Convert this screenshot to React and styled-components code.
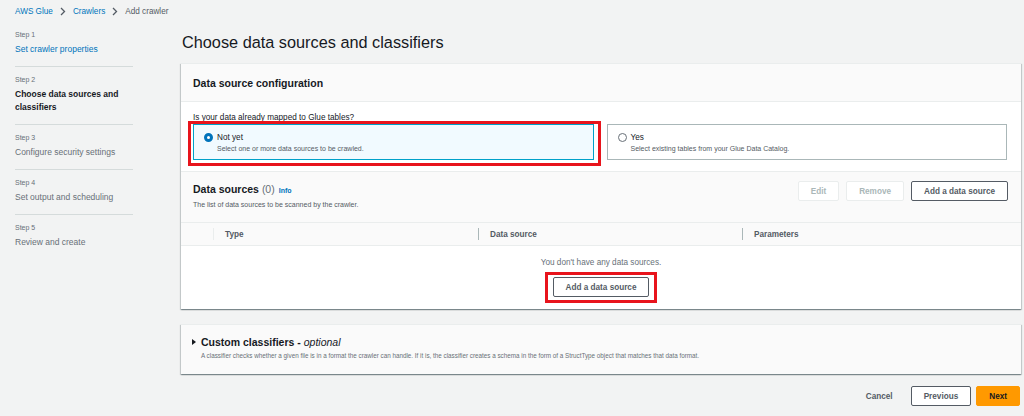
import styled, { createGlobalStyle } from 'styled-components';

const GlobalStyle = createGlobalStyle`
    html, body {
        margin: 0;
        padding: 0;
        background: #f2f3f3;
    }
    body {
        font-family: "Liberation Sans", Arial, sans-serif;
        color: #16191f;
    }
    * {
        box-sizing: border-box;
    }
`;

//
const Page = styled.div({
    display: 'grid',
    gridTemplateColumns: '181px 1fr',
    gridTemplateRows: '22px auto',
    width: '1024px',
    height: '416px',
    overflow: 'hidden',
});

//
const Breadcrumbs = styled.nav({
    gridColumn: '1 / 3',
    display: 'flex',
    alignItems: 'center',
    gap: '7px',
    paddingLeft: '15px',
    fontSize: '8.2px',
    '.link': {
        color: '#0073bb',
    },
    '.current': {
        color: '#545b64',
    },
});

//
const SideNav = styled.aside({
    paddingLeft: '15px',
    '.step': {
        width: '118px',
        padding: '7px 0 10px',
        borderBottom: '1px solid #d5dbdb',
        '&:last-child': {
            borderBottom: '0',
        },
    },
    '.label': {
        fontSize: '7px',
        lineHeight: '12px',
        color: '#687078',
    },
    '.title': {
        marginTop: '2px',
        fontSize: '8.5px',
        lineHeight: '13px',
        color: '#687078',
    },
    '.done': {
        color: '#0073bb',
    },
    '.active': {
        color: '#16191f',
        fontWeight: 'bold',
    },
});

//
const Main = styled.main({
    padding: '8px 3px 0 0',
    h1: {
        margin: '0 0 9px 1px',
        fontSize: '16.3px',
        lineHeight: '24px',
        fontWeight: 'normal',
    },
});

//
const Container = styled.section(({ $muted }) => ({
    position: 'relative',
    background: $muted ? '#fafafa' : '#fff',
    borderTop: '1px solid #eaeded',
    boxShadow: '0 1px 1px 0 rgba(0,28,36,.3), 1px 1px 1px 0 rgba(0,28,36,.15), -1px 1px 1px 0 rgba(0,28,36,.15)',
}));

//
const PanelHeader = styled.header({
    display: 'flex',
    alignItems: 'center',
    height: '38px',
    padding: '0 12px',
    background: '#fafafa',
    borderBottom: '1px solid #eaeded',
    fontSize: '10.5px',
    fontWeight: 'bold',
});

//
const PanelBody = styled.div({
    padding: '10px 14px 11px 12px',
    borderBottom: '1px solid #eaeded',
    '.question': {
        fontSize: '8.2px',
        lineHeight: '12px',
    },
});

//
const Tiles = styled.div({
    display: 'grid',
    gridTemplateColumns: '1fr 1fr',
    gap: '13px',
});

//
const Tile = styled.label(({ $checked }) => ({
    position: 'relative',
    display: 'block',
    height: '36px',
    padding: '5px 10px 5px 10px',
    border: `1px solid ${$checked ? '#00a1c9' : '#aab7b8'}`,
    background: $checked ? '#f1faff' : '#fff',
    '.row': {
        display: 'flex',
        alignItems: 'center',
        gap: '4px',
        height: '14px',
        fontSize: '8.2px',
    },
    '.desc': {
        paddingLeft: '13px',
        fontSize: '7px',
        lineHeight: '10px',
        color: '#545b64',
    },
}));

//
const Radio = styled.span(({ $checked }) => ({
    display: 'inline-block',
    width: '9px',
    height: '9px',
    borderRadius: '50%',
    border: $checked ? '3px solid #0073bb' : '1px solid #687078',
    background: '#fff',
}));

// 標註框
const Highlight = styled.span(({ $inset }) => ({
    position: 'absolute',
    inset: $inset,
    border: '3px solid #e8141c',
    pointerEvents: 'none',
}));

//
const TableHeader = styled.div({
    display: 'flex',
    justifyContent: 'space-between',
    alignItems: 'flex-start',
    height: '50px',
    padding: '10px 13px 0 12px',
    background: '#fafafa',
    h2: {
        margin: 0,
        fontSize: '10.5px',
        lineHeight: '14px',
        fontWeight: 'bold',
    },
    '.count': {
        fontWeight: 'normal',
        color: '#687078',
    },
    '.info': {
        marginLeft: '4px',
        fontSize: '7px',
        color: '#0073bb',
    },
    '.desc': {
        marginTop: '2px',
        fontSize: '7px',
        lineHeight: '10px',
        color: '#545b64',
    },
    '.actions': {
        display: 'flex',
        gap: '7px',
        marginTop: '-1px',
    },
});

//
const Button = styled.button(({ $variant }) => ({
    position: 'relative',
    height: '20px',
    padding: '0 12px',
    borderRadius: '2px',
    fontFamily: 'inherit',
    fontSize: '8.2px',
    fontWeight: 'bold',
    cursor: 'pointer',
    ...($variant === 'disabled' && {
        border: '1px solid #eaeded',
        background: '#fff',
        color: '#aab7b8',
    }),
    ...($variant === 'normal' && {
        border: '1px solid #545b64',
        background: '#fff',
        color: '#545b64',
    }),
    ...($variant === 'link' && {
        border: '1px solid transparent',
        background: 'transparent',
        color: '#545b64',
    }),
    ...($variant === 'primary' && {
        border: '1px solid #ff9900',
        background: '#ff9900',
        color: '#16191f',
    }),
}));

//
const ColumnRow = styled.div({
    display: 'grid',
    gridTemplateColumns: '32px 265px 264px 1fr',
    height: '24px',
    background: '#fafafa',
    borderTop: '1px solid #eaeded',
    borderBottom: '1px solid #eaeded',
});

//
const Column = styled.div(({ $faint }) => ({
    position: 'relative',
    display: 'flex',
    alignItems: 'center',
    paddingLeft: '12px',
    fontSize: '8.2px',
    fontWeight: 'bold',
    color: '#545b64',
    '&::before': {
        content: '""',
        position: 'absolute',
        left: 0,
        top: '5px',
        height: '12px',
        borderLeft: `1px solid ${$faint ? '#eaeded' : '#aab7b8'}`,
    },
}));

//
const EmptyState = styled.div({
    display: 'flex',
    flexDirection: 'column',
    alignItems: 'center',
    padding: '11px 0 12px',
    '.mesg': {
        fontSize: '8.2px',
        lineHeight: '12px',
        color: '#687078',
        marginBottom: '8px',
    },
});

//
const Classifiers = styled.div({
    padding: '10px 12px 13px 11px',
    '.title': {
        display: 'flex',
        alignItems: 'center',
        gap: '5px',
        height: '14px',
        fontSize: '10.5px',
        fontWeight: 'bold',
    },
    '.title em': {
        fontWeight: 'normal',
    },
    '.desc': {
        marginTop: '2px',
        paddingLeft: '9px',
        fontSize: '6.3px',
        lineHeight: '10px',
        color: '#687078',
    },
});

//
const Footer = styled.footer({
    display: 'flex',
    justifyContent: 'flex-end',
    gap: '5px',
    marginTop: '12px',
    paddingRight: '1px',
});

//
const Chevron = () => (

    <svg width="6" height="9" viewBox="0 0 6 9">
        <path d="M1 1l3.5 3.5L1 8" fill="none" stroke="#545b64" strokeWidth="1.3" />
    </svg>

);

//
const Caret = () => (

    <svg width="4" height="6" viewBox="0 0 4 6">
        <path d="M0 0l4 3-4 3z" fill="#16191f" />
    </svg>

);

const steps = [
    { label: 'Step 1', title: 'Set crawler properties', state: 'done' },
    { label: 'Step 2', title: 'Choose data sources and classifiers', state: 'active' },
    { label: 'Step 3', title: 'Configure security settings' },
    { label: 'Step 4', title: 'Set output and scheduling' },
    { label: 'Step 5', title: 'Review and create' },
];

//
const App = () => (

    <>
        <GlobalStyle />
        <Page>
            <Breadcrumbs>
                <span className="link">AWS Glue</span>
                <Chevron />
                <span className="link">Crawlers</span>
                <Chevron />
                <span className="current">Add crawler</span>
            </Breadcrumbs>

            <SideNav>
                {
                    steps.map(({ label, title, state }) => (
                        <div className="step" key={label}>
                            <div className="label">{label}</div>
                            <div className={`title ${state || ''}`}>{title}</div>
                        </div>
                    ))
                }
            </SideNav>

            <Main>
                <h1>Choose data sources and classifiers</h1>

                <Container>
                    <PanelHeader>Data source configuration</PanelHeader>
                    <PanelBody>
                        <div className="question">Is your data already mapped to Glue tables?</div>
                        <Tiles>
                            <Tile $checked>
                                <div className="row">
                                    <Radio $checked />
                                    Not yet
                                </div>
                                <div className="desc">Select one or more data sources to be crawled.</div>
                                <Highlight $inset="-4px -8px -7px -6px" />
                            </Tile>
                            <Tile>
                                <div className="row">
                                    <Radio />
                                    Yes
                                </div>
                                <div className="desc">Select existing tables from your Glue Data Catalog.</div>
                            </Tile>
                        </Tiles>
                    </PanelBody>

                    <TableHeader>
                        <div>
                            <h2>
                                Data sources <span className="count">(0)</span>
                                <span className="info">Info</span>
                            </h2>
                            <div className="desc">The list of data sources to be scanned by the crawler.</div>
                        </div>
                        <div className="actions">
                            <Button $variant="disabled">Edit</Button>
                            <Button $variant="disabled">Remove</Button>
                            <Button $variant="normal">Add a data source</Button>
                        </div>
                    </TableHeader>

                    <ColumnRow>
                        <div />
                        <Column $faint>Type</Column>
                        <Column>Data source</Column>
                        <Column>Parameters</Column>
                    </ColumnRow>

                    <EmptyState>
                        <div className="mesg">You don't have any data sources.</div>
                        <Button $variant="normal">
                            Add a data source
                            <Highlight $inset="-6px -9px -7px -9px" />
                        </Button>
                    </EmptyState>
                </Container>

                <Container $muted style={{ marginTop: '15px' }}>
                    <Classifiers>
                        <div className="title">
                            <Caret />
                            <span>Custom classifiers - <em>optional</em></span>
                        </div>
                        <div className="desc">
                            A classifier checks whether a given file is in a format the crawler can handle. If it is, the classifier creates a schema in the form of a StructType object that matches that data format.
                        </div>
                    </Classifiers>
                </Container>

                <Footer>
                    <Button $variant="link">Cancel</Button>
                    <Button $variant="normal">Previous</Button>
                    <Button $variant="primary">Next</Button>
                </Footer>
            </Main>
        </Page>
    </>

);

export default App;
